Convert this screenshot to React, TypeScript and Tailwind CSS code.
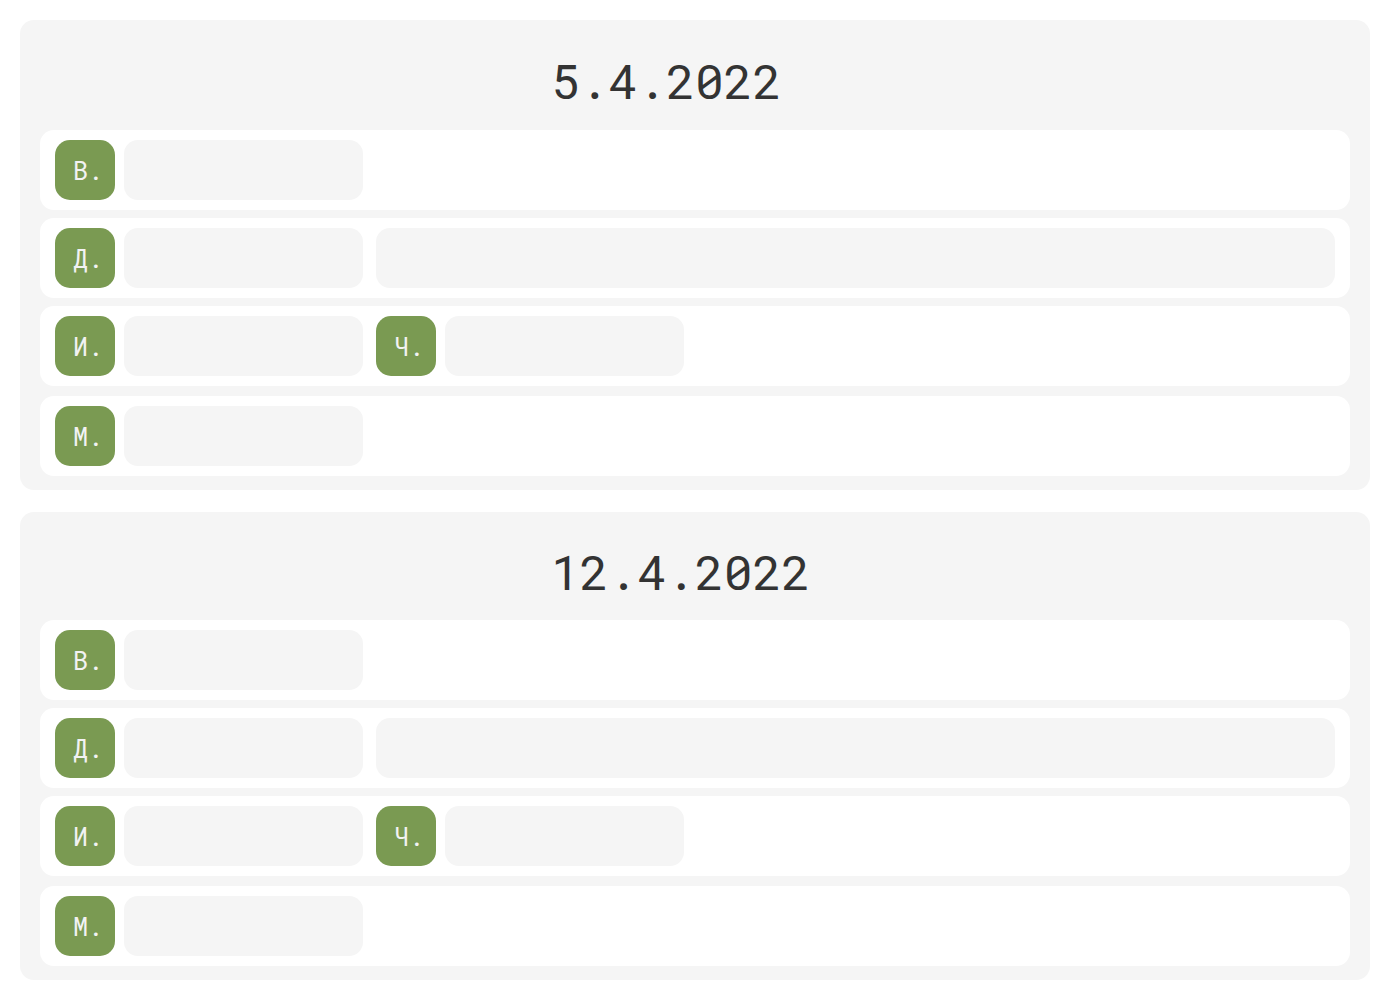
import React from "react";

type Row = { label: string; wide?: boolean; extra?: string };

const rows: Row[] = [
  { label: "В." },
  { label: "Д.", wide: true },
  { label: "И.", extra: "Ч." },
  { label: "М." },
];

function Badge({ label }: { label: string }) {
  return (
    <div className="flex h-[60px] w-[60px] shrink-0 items-center justify-center rounded-[15px] bg-[#7a9a52] pl-[6px] text-[25px] leading-none text-[#f2f2f2]">
      {label}
    </div>
  );
}

function Field({ grow }: { grow?: boolean }) {
  return (
    <div
      className={
        grow
          ? "h-[60px] flex-1 rounded-[14px] bg-[#f5f5f5]"
          : "h-[60px] w-[239px] shrink-0 rounded-[14px] bg-[#f5f5f5]"
      }
    />
  );
}

function DayCard({ date, head }: { date: string; head: string }) {
  return (
    <section className="rounded-[14px] bg-[#f5f5f5] px-5 pb-[14px]">
      <h2 className={"flex items-center pl-[511px] text-[48px] font-normal leading-none text-[#333333] " + head}>
        {date}
      </h2>
      <div className="flex flex-col gap-2">
        {rows.map((row, i) => (
          <div
            key={row.label}
            className={
              "flex h-[80px] items-center gap-[13px] rounded-[14px] bg-white px-[15px]" +
              (i === rows.length - 1 ? " mt-[2px]" : "")
            }
          >
            <div className="flex items-center gap-[9px]">
              <Badge label={row.label} />
              <Field />
            </div>
            {row.wide && <Field grow />}
            {row.extra && (
              <div className="flex items-center gap-[9px]">
                <Badge label={row.extra} />
                <Field />
              </div>
            )}
          </div>
        ))}
      </div>
    </section>
  );
}

export default function App() {
  return (
    <div
      className="flex min-h-[1000px] flex-col gap-[22px] bg-white p-5"
      style={{ fontFamily: '"Roboto Mono", "DejaVu Sans Mono", "Liberation Mono", monospace' }}
    >
      <DayCard date="5.4.2022" head="h-[110px] pt-[12px]" />
      <DayCard date="12.4.2022" head="h-[108px] pt-[12px]" />
    </div>
  );
}
